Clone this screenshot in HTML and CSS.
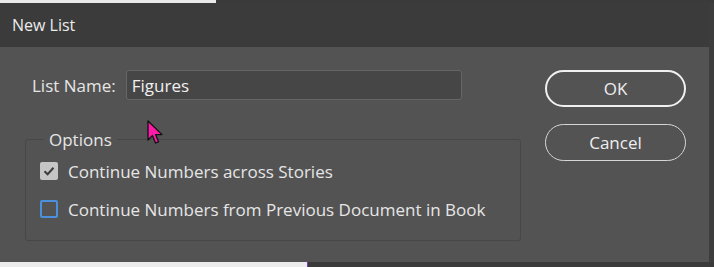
FILE: index.html
```html
<!DOCTYPE html>
<html lang="en">
<head>
  <meta charset="UTF-8" />
  <title>New List</title>
  <link rel="stylesheet" href="styles.css">
</head>
<body>
  <div class="page">
    <div class="strip strip-top">
      <div class="doc-paper"></div>
      <div class="doc-panel"></div>
    </div>

    <div class="middle">
      <div class="dialog">
        <div class="title-bar">New List</div>

        <div class="dialog-body">
          <div class="main-col">
            <div class="name-row">
              <label for="list-name">List Name:</label>
              <input id="list-name" type="text" value="Figures" />
            </div>

            <fieldset class="options">
              <legend>Options</legend>
              <div class="check-row">
                <span class="box checked">
                  <svg width="12" height="10" viewBox="0 0 12 10"><path d="M1.5 5.2 L4.6 8.2 L10.5 1.8" fill="none" stroke="#3d3d3d" stroke-width="2"/></svg>
                </span>
                <span>Continue Numbers across Stories</span>
              </div>
              <div class="check-row">
                <span class="box focus"></span>
                <span>Continue Numbers from Previous Document in Book</span>
              </div>
            </fieldset>
          </div>

          <div class="button-col">
            <button class="btn primary">OK</button>
            <button class="btn">Cancel</button>
          </div>
        </div>

        <svg class="cursor" width="20" height="28" viewBox="0 0 20 28">
          <path d="M1 1 L1 20 L5.5 15.5 L8.5 23 L11.5 21.8 L8.6 14.6 L15 14.6 Z" fill="#ff1aa8" stroke="#111" stroke-width="1.3" stroke-linejoin="round"/>
        </svg>
      </div>
      <div class="side"></div>
    </div>

    <div class="strip strip-bottom">
      <div class="doc-paper low"></div>
      <div class="doc-panel"></div>
    </div>
  </div>
</body>
</html>
```

FILE: styles.css
```css
body {
  margin: 0;
  background-color: #3c3c3c;
  font-family: "Open Sans", "Noto Sans", sans-serif;
  overflow: hidden;
}
.page {
  width: 714px;
  height: 267px;
  display: flex;
  flex-direction: column;
}
.strip {
  display: flex;
  flex: none;
}
.strip-top {
  height: 3px;
}
.strip-bottom {
  height: 5px;
}
.doc-paper {
  width: 216px;
  background-color: #e9e9e9;
}
.doc-paper.low {
  width: 308px;
  background-color: #ececec;
  box-shadow: inset -15px 0 0 -14px #7a3cc8;
}
.doc-panel {
  flex: 1;
  background-color: #3a3a3a;
}
.middle {
  flex: 1;
  display: flex;
}
.side {
  flex: 1;
  background-color: #3d3d3d;
}
.dialog {
  position: relative;
  width: 709px;
  background-color: #535353;
  display: flex;
  flex-direction: column;
}
.title-bar {
  height: 44px;
  background-color: #3b3b3b;
  color: #ececec;
  font-size: 16px;
  line-height: 44px;
  padding-left: 12px;
}
.dialog-body {
  display: flex;
  padding: 23px 0 0 25px;
}
.main-col {
  width: 496px;
}
.name-row {
  display: flex;
  align-items: center;
  gap: 10px;
  padding-left: 7px;
  height: 30px;
}
.name-row label {
  color: #e6e6e6;
  font-size: 17px;
}
.name-row input {
  width: 336px;
  height: 30px;
  box-sizing: border-box;
  background-color: #464646;
  border: 1px solid #666666;
  border-radius: 3px;
  color: #f0f0f0;
  font-family: inherit;
  font-size: 17px;
  padding: 0 5px;
  outline: none;
}
.options {
  margin: 28px 0 0;
  padding: 7px 0 0 14px;
  border: 1px solid #474747;
  border-radius: 3px;
  height: 113px;
  box-sizing: border-box;
  min-width: 0;
}
.options legend {
  color: #e6e6e6;
  font-size: 17px;
  line-height: 23px;
  padding: 0 5px;
  margin-left: 4px;
}
.check-row {
  display: flex;
  align-items: center;
  gap: 10px;
  color: #e6e6e6;
  font-size: 17px;
  height: 26px;
  margin-bottom: 12px;
}
.box {
  width: 18px;
  height: 18px;
  box-sizing: border-box;
  border-radius: 2px;
  display: flex;
  align-items: center;
  justify-content: center;
}
.box.checked {
  background-color: #c6c6c6;
}
.box.focus {
  border: 2px solid #4a90dc;
}
.button-col {
  display: flex;
  flex-direction: column;
  gap: 17px;
  margin-left: 24px;
}
.btn {
  width: 141px;
  height: 37px;
  border-radius: 19px;
  background: transparent;
  border: 1px solid #d6d6d6;
  color: #eeeeee;
  font-family: inherit;
  font-size: 17px;
}
.btn.primary {
  border: 2px solid #f0f0f0;
}
.cursor {
  position: absolute;
  left: 147px;
  top: 117px;
}
```
